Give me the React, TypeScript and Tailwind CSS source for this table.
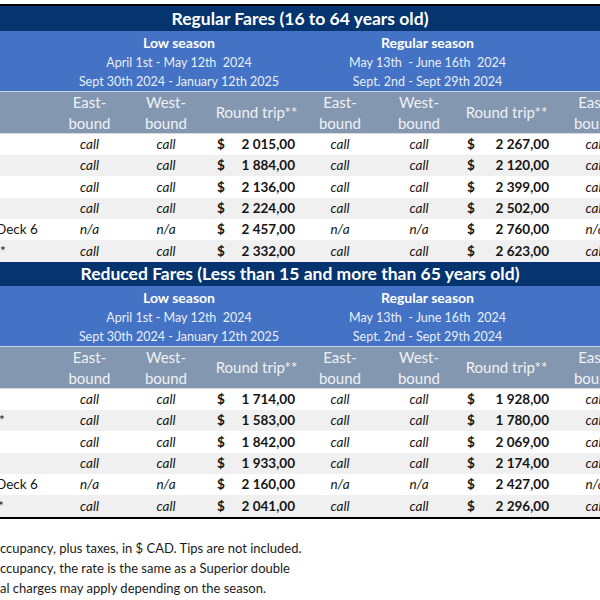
import React from "react";

type Row = { label: string; labelCls: string; lo: string[]; reg: string[]; next: string };

const regularRows: Row[] = [
  { label: "", labelCls: "", lo: ["call", "call", "2 015,00"], reg: ["call", "call", "2 267,00"], next: "call" },
  { label: "", labelCls: "", lo: ["call", "call", "1 884,00"], reg: ["call", "call", "2 120,00"], next: "call" },
  { label: "", labelCls: "", lo: ["call", "call", "2 136,00"], reg: ["call", "call", "2 399,00"], next: "call" },
  { label: "", labelCls: "", lo: ["call", "call", "2 224,00"], reg: ["call", "call", "2 502,00"], next: "call" },
  { label: "Deck 6", labelCls: "-ml-[4px]", lo: ["n/a", "n/a", "2 457,00"], reg: ["n/a", "n/a", "2 760,00"], next: "n/a" },
  { label: "*", labelCls: "ml-[0px]", lo: ["call", "call", "2 332,00"], reg: ["call", "call", "2 623,00"], next: "call" },
];

const reducedRows: Row[] = [
  { label: "", labelCls: "", lo: ["call", "call", "1 714,00"], reg: ["call", "call", "1 928,00"], next: "call" },
  { label: "*", labelCls: "-ml-[1px]", lo: ["call", "call", "1 583,00"], reg: ["call", "call", "1 780,00"], next: "call" },
  { label: "", labelCls: "", lo: ["call", "call", "1 842,00"], reg: ["call", "call", "2 069,00"], next: "call" },
  { label: "", labelCls: "", lo: ["call", "call", "1 933,00"], reg: ["call", "call", "2 174,00"], next: "call" },
  { label: "Deck 6", labelCls: "-ml-[4px]", lo: ["n/a", "n/a", "2 160,00"], reg: ["n/a", "n/a", "2 427,00"], next: "n/a" },
  { label: "*", labelCls: "-ml-[2px]", lo: ["call", "call", "2 041,00"], reg: ["call", "call", "2 296,00"], next: "call" },
];

const gridCols = "grid grid-cols-[58px_63px_90px_89px_80px_78px_97px_80px] w-[635px]";
const rowHeights = ["h-[21px]", "h-[21px]", "h-[22px]", "h-[21px]", "h-[21px]", "h-[22px]"];

function Section({ title, rows, titleH }: { title: string; rows: Row[]; titleH: string }) {
  return (
    <div>
      <div className={`${titleH} w-[600px] bg-[#06346f] flex items-center justify-center text-white font-bold text-[17.5px] leading-none`}>
        {title}
      </div>
      <div className={`${gridCols} h-[60px] bg-[#4472c4] text-[#e8eef8] text-[12.5px]`}>
        <div />
        <div className="col-span-3 flex flex-col items-center pt-[2px] leading-[19.5px]">
          <div className="font-bold text-white text-[14px]">Low season</div>
          <div className="whitespace-pre">April 1st - May 12th  2024</div>
          <div className="whitespace-pre">Sept 30th 2024 - January 12th 2025</div>
        </div>
        <div className="col-span-3 flex flex-col items-center pt-[2px] leading-[19.5px]">
          <div className="font-bold text-white text-[14px]">Regular season</div>
          <div className="whitespace-pre">May 13th  - June 16th  2024</div>
          <div className="whitespace-pre">Sept. 2nd - Sept 29th 2024</div>
        </div>
        <div />
      </div>
      <div className="h-px w-[600px] bg-[#c9d3e2]" />
      <div className={`${gridCols} h-[41px] bg-[#8497b0] text-[#eef1f6] text-[15px] leading-[20.5px]`}>
        <div />
        <div className="flex flex-col items-center justify-center"><span>East-</span><span>bound</span></div>
        <div className="flex flex-col items-center justify-center"><span>West-</span><span>bound</span></div>
        <div className="flex items-center justify-center pl-[2px] whitespace-nowrap">Round trip**</div>
        <div className="flex flex-col items-center justify-center"><span>East-</span><span>bound</span></div>
        <div className="flex flex-col items-center justify-center"><span>West-</span><span>bound</span></div>
        <div className="flex items-center justify-center whitespace-nowrap">Round trip**</div>
        <div className="flex flex-col items-center justify-center"><span>East-</span><span>bound</span></div>
      </div>
      <div className="h-px w-[600px] bg-[#d9d9d9]" />
      {rows.map((r, i) => (
        <div
          key={i}
          className={`${gridCols} ${rowHeights[i]} ${i % 2 === 1 ? "bg-[#f0f0f0]" : "bg-white"} text-[#151515] text-[13.5px] items-center`}
        >
          <div className="overflow-hidden whitespace-nowrap">
            <span className={`inline-block ${r.labelCls}`}>{r.label}</span>
          </div>
          <div className="text-center italic">{r.lo[0]}</div>
          <div className="text-center italic">{r.lo[1]}</div>
          <div className="flex justify-between pl-[6px] pr-[5px] font-bold">
            <span>$</span>
            <span>{r.lo[2]}</span>
          </div>
          <div className="text-center italic">{r.reg[0]}</div>
          <div className="text-center italic">{r.reg[1]}</div>
          <div className="flex justify-between pl-[9px] pr-[6px] font-bold">
            <span>$</span>
            <span>{r.reg[2]}</span>
          </div>
          <div className="text-center italic">{r.next}</div>
        </div>
      ))}
    </div>
  );
}

export default function App() {
  return (
    <div
      className="w-[600px] h-[600px] overflow-hidden bg-white"
      style={{ fontFamily: "Lato, 'Open Sans', 'Liberation Sans', sans-serif" }}
    >
      <div className="h-[4px]" />
      <div className="h-[2px] w-[600px] bg-black" />
      <Section title="Regular Fares (16 to 64 years old)" rows={regularRows} titleH="h-[25px]" />
      <Section title="Reduced Fares (Less than 15 and more than 65 years old)" rows={reducedRows} titleH="h-[24px]" />
      <div className="h-[2px] w-[600px] bg-black" />
      <div className="pt-[19px] text-[13px] leading-[20px] text-[#1a1a1a] whitespace-nowrap">
        <div>ccupancy, plus taxes, in $ CAD. Tips are not included.</div>
        <div>ccupancy, the rate is the same as a Superior double</div>
        <div>al charges may apply depending on the season.</div>
      </div>
    </div>
  );
}
